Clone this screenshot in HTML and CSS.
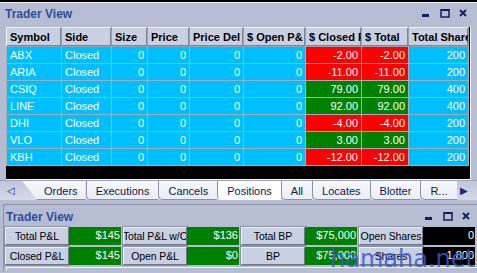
FILE: index.html
```html
<!DOCTYPE html>
<html lang="en">
<head>
    <meta charset="UTF-8">
    <title>Trader View</title>
    <link rel="stylesheet" href="styles.css">
</head>
<body>
    <div class="top-strip"></div>

    <div class="panel">
        <div class="title-bar">
            <span class="title">Trader View</span>
            <svg class="win-ctrl" width="46" height="10" viewBox="0 0 46 10">
                <rect x="0" y="5" width="7" height="3" fill="#0f1f5f"/>
                <rect x="19" y="0.5" width="8" height="7.5" fill="none" stroke="#0f1f5f" stroke-width="1.5"/>
                <rect x="19" y="0" width="8.5" height="2" fill="#0f1f5f"/>
                <path d="M38 1 L44 7 M44 1 L38 7" stroke="#0f1f5f" stroke-width="1.8"/>
            </svg>
        </div>

        <div class="grid-wrap">
            <table class="grid">
                <colgroup>
                    <col style="width:55px"><col style="width:50px"><col style="width:36px">
                    <col style="width:42px"><col style="width:54px"><col style="width:62px">
                    <col style="width:56px"><col style="width:47px"><col style="width:60px">
                </colgroup>
                <thead>
                    <tr>
                        <th>Symbol</th><th>Side</th><th>Size</th><th>Price</th><th>Price Del</th>
                        <th>$ Open P&amp;</th><th>$ Closed P</th><th>$ Total</th><th>Total Shares</th>
                    </tr>
                </thead>
                <tbody>
                    <tr><td>ABX</td><td>Closed</td><td class="num">0</td><td class="num">0</td><td class="num">0</td><td class="num">0</td><td class="num loss">-2.00</td><td class="num loss">-2.00</td><td class="num">200</td></tr>
                    <tr><td>ARIA</td><td>Closed</td><td class="num">0</td><td class="num">0</td><td class="num">0</td><td class="num">0</td><td class="num loss">-11.00</td><td class="num loss">-11.00</td><td class="num">200</td></tr>
                    <tr><td>CSIQ</td><td>Closed</td><td class="num">0</td><td class="num">0</td><td class="num">0</td><td class="num">0</td><td class="num gain">79.00</td><td class="num gain">79.00</td><td class="num">400</td></tr>
                    <tr><td>LINE</td><td>Closed</td><td class="num">0</td><td class="num">0</td><td class="num">0</td><td class="num">0</td><td class="num gain">92.00</td><td class="num gain">92.00</td><td class="num">400</td></tr>
                    <tr><td>DHI</td><td>Closed</td><td class="num">0</td><td class="num">0</td><td class="num">0</td><td class="num">0</td><td class="num loss">-4.00</td><td class="num loss">-4.00</td><td class="num">200</td></tr>
                    <tr><td>VLO</td><td>Closed</td><td class="num">0</td><td class="num">0</td><td class="num">0</td><td class="num">0</td><td class="num gain">3.00</td><td class="num gain">3.00</td><td class="num">200</td></tr>
                    <tr><td>KBH</td><td>Closed</td><td class="num">0</td><td class="num">0</td><td class="num">0</td><td class="num">0</td><td class="num loss">-12.00</td><td class="num loss">-12.00</td><td class="num">200</td></tr>
                </tbody>
            </table>
        </div>

        <div class="tab-bar">
            <span class="tab-arrow left">&#9665;</span>
            <div class="tabs">
                <span class="tab first">Orders</span>
                <span class="tab">Executions</span>
                <span class="tab">Cancels</span>
                <span class="tab active">Positions</span>
                <span class="tab">All</span>
                <span class="tab">Locates</span>
                <span class="tab">Blotter</span>
                <span class="tab">R...</span>
            </div>
            <span class="tab-arrow right">&#9654;</span>
        </div>
    </div>

    <div class="summary">
        <div class="title-bar small">
            <span class="title">Trader View</span>
            <svg class="win-ctrl" width="46" height="10" viewBox="0 0 46 10">
                <rect x="0" y="5" width="7" height="3" fill="#0f1f5f"/>
                <rect x="19" y="0.5" width="8" height="7.5" fill="none" stroke="#0f1f5f" stroke-width="1.5"/>
                <rect x="19" y="0" width="8.5" height="2" fill="#0f1f5f"/>
                <path d="M38 1 L44 7 M44 1 L38 7" stroke="#0f1f5f" stroke-width="1.8"/>
            </svg>
        </div>
        <div class="stats">
            <div class="stat"><span class="label">Total P&amp;L</span><span class="value green">$145</span></div>
            <div class="stat"><span class="label">Total P&amp;L w/C</span><span class="value green">$136</span></div>
            <div class="stat"><span class="label">Total BP</span><span class="value green">$75,000</span></div>
            <div class="stat"><span class="label">Open Shares</span><span class="value black">0</span></div>
            <div class="stat"><span class="label">Closed P&amp;L</span><span class="value green">$145</span></div>
            <div class="stat"><span class="label">Open P&amp;L</span><span class="value green">$0</span></div>
            <div class="stat"><span class="label">BP</span><span class="value green">$75,000</span></div>
            <div class="stat"><span class="label">Shares</span><span class="value black">1,800</span></div>
        </div>
        <div class="bottom-line"></div>
        <span class="watermark">hamaha.net</span>
    </div>
</body>
</html>
```

FILE: styles.css
```css
* {
    margin: 0;
    padding: 0;
    box-sizing: border-box;
}

body {
    width: 477px;
    height: 273px;
    overflow: hidden;
    background: #b6bdd3;
    font-family: 'Liberation Sans', Arial, sans-serif;
    font-size: 11px;
    color: #000;
}

.top-strip {
    height: 3px;
    background: #000;
    border-bottom: 1px solid #e8ecf4;
}

.title-bar {
    height: 24px;
    display: flex;
    align-items: center;
    justify-content: space-between;
    padding: 0 9px 2px 5px;
}

.title {
    font-size: 12px;
    font-weight: bold;
    color: #2d4d9d;
}

.grid-wrap {
    margin-left: 6px;
    width: 465px;
    height: 153px;
    background: #000;
    border-right: 1px solid #f4f6fa;
    border-bottom: 1px solid #f4f6fa;
}

.grid {
    table-layout: fixed;
    width: 462px;
    border-collapse: collapse;
}

.grid th {
    height: 19px;
    background: #c8d0e2;
    font-weight: bold;
    text-align: left;
    padding: 0 3px;
    white-space: nowrap;
    overflow: hidden;
    border: 1px solid #9aa0b0;
    border-top-color: #f0f2f8;
    border-left-color: #f0f2f8;
    box-shadow: inset -1px -1px 0 #7f8596;
}

.grid td {
    height: 17px;
    background: #00bfff;
    color: #fff;
    padding: 0 3px;
    white-space: nowrap;
    overflow: hidden;
    border: 1px solid #a8acb4;
}

.grid td.num {
    text-align: right;
}

.grid td.loss {
    background: #ff0000;
}

.grid td.gain {
    background: #008000;
}

.tab-bar {
    height: 20px;
    display: flex;
    align-items: stretch;
    background: linear-gradient(#c2c6dc, #d6d9e8);
    border-top: 1px solid #9ea3b8;
}

.tab-arrow {
    color: #1b2a7a;
    font-size: 10px;
    display: flex;
    align-items: center;
}

.tab-arrow.left {
    width: 22px;
    padding-left: 7px;
}

.tab-arrow.right {
    padding-left: 3px;
}

.tabs {
    display: flex;
}

.tab {
    display: flex;
    align-items: center;
    padding: 1px 9px 0 9px;
    font-size: 11px;
    color: #0a1a4a;
    background: linear-gradient(#f7f8fc, #eceef6);
    border-left: 1px solid #8c91a8;
    border-bottom: 1px solid #8c91a8;
    border-bottom-left-radius: 5px;
    white-space: nowrap;
}

.tab.first {
    padding-left: 22px;
    padding-right: 8px;
    border-left: none;
    clip-path: polygon(0 0, 100% 0, 100% 100%, 15px 100%);
}

.tab.active {
    background: #fff;
    border-bottom-color: #fff;
}

.summary {
    position: relative;
    margin-top: 4px;
    margin-left: 3px;
    height: 68px;
    border-top: 1px solid #8d92a6;
    border-left: 1px solid #8d92a6;
}

.title-bar.small {
    height: 22px;
    padding: 2px 6px 0 2px;
}

.stats {
    display: grid;
    grid-template-columns: repeat(4, 116px);
    column-gap: 2px;
    row-gap: 2px;
    padding-left: 1px;
}

.stat {
    display: flex;
    height: 18px;
}

.label {
    width: 64px;
    background: #c8d0e4;
    border: 1px solid #6f7486;
    border-top-color: #eef0f6;
    border-left-color: #eef0f6;
    box-shadow: 0 0 0 1px #8d92a6;
    display: flex;
    align-items: center;
    justify-content: center;
    font-size: 10.5px;
    letter-spacing: -0.1px;
    white-space: nowrap;
    overflow: hidden;
}

.value {
    flex: 1;
    color: #fff;
    text-align: right;
    padding-right: 1px;
    line-height: 16px;
}

.value.green {
    background: #008000;
}

.value.black {
    background: #000;
}

.bottom-line {
    margin-top: 2px;
    height: 3px;
    border-top: 1px solid #f4f6fa;
    border-left: 1px solid #f4f6fa;
    margin-left: 2px;
}

.watermark {
    position: absolute;
    right: 2px;
    bottom: 1px;
    line-height: 24px;
    font-family: 'DejaVu Sans', sans-serif;
    font-size: 24px;
    color: rgba(58, 88, 200, 0.85);
    pointer-events: none;
}
```
